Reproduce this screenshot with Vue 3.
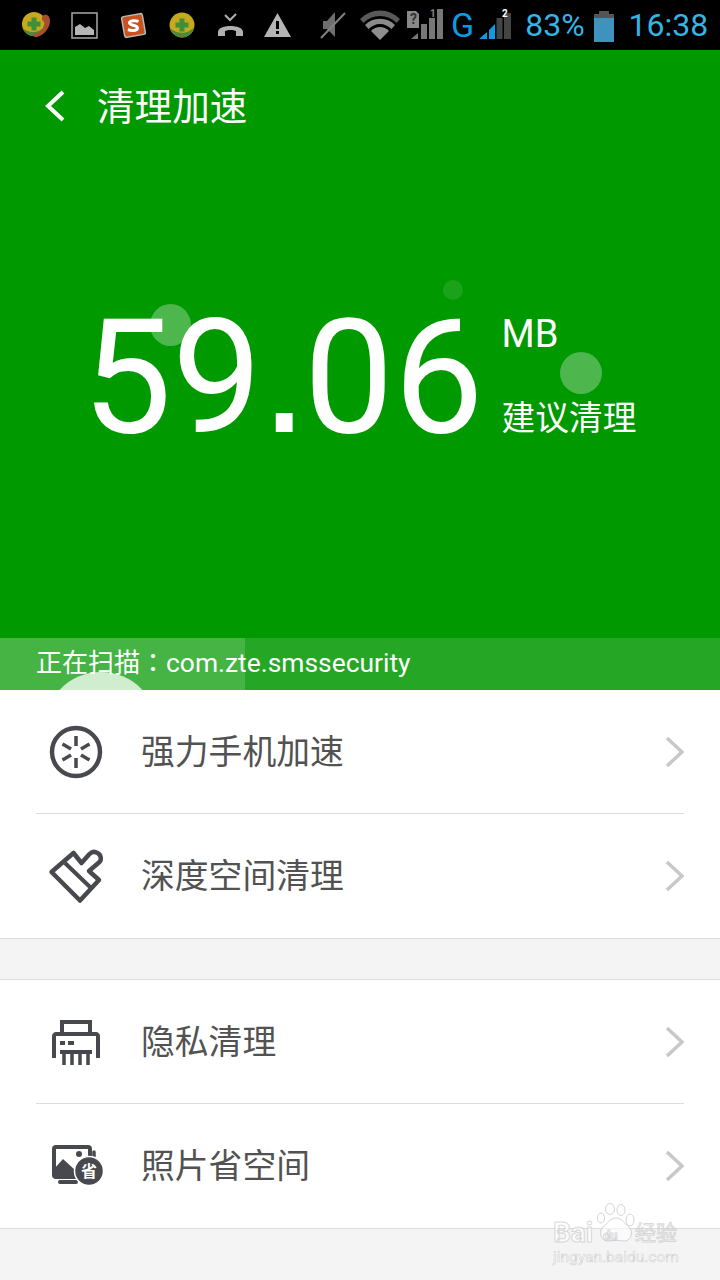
<script setup>
const groups = [
  [
    { label: '强力手机加速', icon: 'boost' },
    { label: '深度空间清理', icon: 'brush' },
  ],
  [
    { label: '隐私清理', icon: 'shredder' },
    { label: '照片省空间', icon: 'photo' },
  ],
]
</script>

<template>
  <div class="page">
    <div class="status">
      <svg class="si s1" width="30" height="30" viewBox="0 0 30 30">
        <circle cx="13" cy="14" r="12" fill="#c7a81e"/>
        <path d="M1.500 18c6 5 15 6 22-1-2 6-6 9-10.500 9-5 0-9-3-11.500-8z" fill="#4c8a3a"/>
        <path d="M10.500 7.500h5v4h4v5h-4v4h-5v-4h-4v-5h4z" fill="#3f8f3a"/>
        <path d="M23 5c4-1 6 2 6 6 0 7-6 14-13 16-3 1-5-2-3-3 5-1 9-4 10-9 1-2 0-3-1-4-2-2-1-5 1-6z" fill="#a8502c"/>
      </svg>
      <svg class="si s2" width="27" height="27" viewBox="0 0 27 27">
        <rect x="1" y="1" width="25" height="25" fill="none" stroke="#a8a8a8" stroke-width="1.500"/>
        <path d="M4 23v-8l5-3 5 4 4-2 5 4v5z" fill="#b5b5b5"/>
      </svg>
      <svg class="si s3" width="25" height="25" viewBox="0 0 25 25">
        <rect x="2" y="2" width="21" height="21" rx="2" transform="rotate(-10 12.500 12.500)" fill="#c9521f" stroke="#b9b9b9" stroke-width="1.500"/>
        <path d="M17.500 8.500c-3-1.500-9-1-9 1.500s8 2 8 5-6 3-9.500 1.500" fill="none" stroke="#fff" stroke-width="3"/>
      </svg>
      <svg class="si s4" width="26" height="26" viewBox="0 0 26 26">
        <circle cx="13" cy="13" r="12.500" fill="#c7a81e"/>
        <path d="M1 16c6 6 18 7 24-1-1 6-6 10.500-12 10.500-6 0-10-4-12-9.500z" fill="#4c8a3a"/>
        <path d="M10.500 6.500h5v4h4v5h-4v4h-5v-4h-4v-5h4z" fill="#3f8f3a"/>
      </svg>
      <svg class="si s5" width="27" height="24" viewBox="0 0 27 24">
        <path d="M8 2l5 5 6-6" fill="none" stroke="#b0b0b0" stroke-width="2"/>
        <path d="M1 23v-4c0-8 25-8 25 0v4h-7v-5c-3-1.500-8-1.500-11 0v5z" fill="#b0b0b0"/>
      </svg>
      <svg class="si s6" width="27" height="24" viewBox="0 0 27 24">
        <path d="M13.500 0L27 24H0z" fill="#b5b5b5"/>
        <rect x="12" y="8" width="3" height="8" fill="#000"/>
        <rect x="12" y="18" width="3" height="3" fill="#000"/>
      </svg>
      <svg class="si s7" width="26" height="28" viewBox="0 0 26 28">
        <path d="M3 10h4l8-9v25l-8-8H3z" fill="#6e6e6e"/>
        <path d="M1 27L25 2" stroke="#808080" stroke-width="2"/>
      </svg>
      <svg class="si s8" width="40" height="30" viewBox="0 0 40 30">
        <path d="M0 9a28 28 0 0 1 40 0l-3.500 4a23 23 0 0 0-33 0z" fill="#5a5a5a"/>
        <path d="M5 15a21 21 0 0 1 30 0l-3.500 4a16 16 0 0 0-23 0z" fill="#8a8a8a"/>
        <path d="M11 21a12 12 0 0 1 18 0L20 30z" fill="#8f8f8f"/>
      </svg>
      <svg class="si s9" width="38" height="32" viewBox="0 0 38 32">
        <path d="M1 3h9l3 3v14H1z" fill="#888"/>
        <text x="4" y="16" class="sim-mark">?</text>
        <path d="M5 31l7-6v6z" fill="#777"/>
        <rect x="15" y="16" width="6" height="15" fill="#777"/>
        <rect x="23" y="10" width="6" height="21" fill="#777"/>
        <rect x="31" y="1" width="6" height="30" fill="#777"/>
        <text x="24" y="9" class="sim-num dim">1</text>
      </svg>
      <span class="net">G</span>
      <svg class="si s10" width="33" height="32" viewBox="0 0 33 32">
        <path d="M0 31l8-7v7z" fill="#0c9be0"/>
        <path d="M10 22l6-6v15h-6z" fill="#0c9be0"/>
        <rect x="17.500" y="10" width="6" height="21" fill="#444"/>
        <rect x="25" y="5" width="7" height="26" fill="#444"/>
        <text x="23" y="9" class="sim-num">2</text>
      </svg>
      <span class="pct">83%</span>
      <svg class="si s11" width="20" height="31" viewBox="0 0 20 31">
        <rect x="5" y="0" width="10" height="4" fill="#555"/>
        <rect x="0" y="3" width="20" height="5" fill="#555"/>
        <rect x="0" y="7" width="20" height="24" fill="#3d93bd"/>
      </svg>
      <span class="time">16:38</span>
    </div>

    <section class="hero">
      <header class="bar">
        <svg class="back" width="20" height="32" viewBox="0 0 20 32">
          <path d="M18 2L3 16l15 14" fill="none" stroke="#fff" stroke-width="4"/>
        </svg>
        <h1 class="title">清理加速</h1>
      </header>

      <div class="reading">
        <span class="dot dot-a"></span>
        <span class="dot dot-b"></span>
        <span class="dot dot-c"></span>
        <span class="value">59<span class="point">.</span>06</span>
        <div class="side">
          <span class="unit">MB</span>
          <span class="hint">建议清理</span>
        </div>
      </div>

      <div class="scan">
        <span class="progress"></span>
        <span class="pulse"></span>
        <span class="scan-text"><span class="scan-cjk">正在扫描：</span>com.zte.smssecurity</span>
      </div>
    </section>

    <div class="groups">
      <ul v-for="(group, g) in groups" :key="g" class="group">
        <li v-for="item in group" :key="item.label" class="row">
          <svg v-if="item.icon === 'boost'" class="ico" width="60" height="60" viewBox="46 722 60 60">
            <circle cx="76" cy="752" r="24" fill="none" stroke="#47494e" stroke-width="4.500"/>
            <g stroke="#47494e" stroke-width="3.500">
              <path d="M76 736v10M76 758v10M62.500 744l8.500 5M81 755l8.500 5M62.500 760l8.500-5M81 749l8.500-5"/>
            </g>
          </svg>
          <svg v-else-if="item.icon === 'brush'" class="ico" width="60" height="60" viewBox="46 846 60 60">
            <path d="M51.500 872L73.500 853l8 10 8-9c2-2 5-3 8-1 4 2 4 7 2 9l-10.500 9 10 9-19 20.500z" fill="none" stroke="#47494e" stroke-width="4.500" stroke-linejoin="round"/>
            <path d="M65 863l26 25" stroke="#47494e" stroke-width="4"/>
          </svg>
          <svg v-else-if="item.icon === 'shredder'" class="ico" width="60" height="60" viewBox="46 1012 60 60">
            <path d="M62 1035v-13h28v13" fill="none" stroke="#47494e" stroke-width="4"/>
            <path d="M56 1056h-2v-20c0-1 1-2 2-2h40c1 0 2 1 2 2v20h-2" fill="none" stroke="#47494e" stroke-width="4"/>
            <rect x="60" y="1050" width="32" height="4" fill="#47494e"/>
            <rect x="60" y="1041" width="5" height="4" fill="#47494e"/>
            <rect x="68" y="1041" width="6" height="4" fill="#47494e"/>
            <path d="M64 1054v11M72 1054v11M80 1054v11M88 1054v11" stroke="#47494e" stroke-width="3.500"/>
          </svg>
          <svg v-else class="ico" width="60" height="60" viewBox="46 1136 60 60">
            <rect x="54" y="1147" width="36" height="30" rx="2" fill="#fff" stroke="#47494e" stroke-width="4"/>
            <path d="M54 1177v-8l9-10 12 11 4 7z" fill="#47494e"/>
            <circle cx="79" cy="1154" r="3" fill="#47494e"/>
            <path d="M94 1152v12" stroke="#47494e" stroke-width="3.500" stroke-linecap="round"/>
            <rect x="58" y="1180" width="20" height="4" rx="2" fill="#47494e"/>
            <circle cx="89" cy="1171" r="14.500" fill="#47494e" stroke="#fff" stroke-width="1.500"/>
            <text x="89" y="1177" class="badge">省</text>
          </svg>
          <span class="label">{{ item.label }}</span>
          <svg class="chev" width="20" height="32" viewBox="0 0 20 32">
            <path d="M3 2l15 14L3 30" fill="none" stroke="#c8c8c8" stroke-width="3.500"/>
          </svg>
        </li>
      </ul>
    </div>

    <div class="mark" aria-hidden="true">
      <svg class="paw" width="42" height="42" viewBox="0 0 42 42">
        <g fill="rgba(255,255,255,.6)" stroke="rgba(185,185,185,.6)" stroke-width="1">
          <ellipse cx="5" cy="15" rx="3.500" ry="5"/>
          <ellipse cx="14" cy="6" rx="4.500" ry="5.500"/>
          <ellipse cx="25" cy="7" rx="4" ry="5.500"/>
          <ellipse cx="34" cy="17" rx="4" ry="6"/>
          <path d="M20 15c5 0 8 5 13 9 5 5 2 15-6 14-5-1-9-1-14 0-8 1-11-9-6-14 5-4 8-9 13-9z"/>
        </g>
      </svg>
      <span class="mark-a">Bai</span>
      <span class="mark-du">du</span>
      <span class="mark-b">经验</span>
      <span class="mark-c">jingyan.baidu.com</span>
    </div>
  </div>
</template>

<style>
html, body { margin: 0; padding: 0; background: #f4f4f4; }
</style>

<style scoped>
.page {
  position: relative;
  width: 720px;
  height: 1280px;
  overflow: hidden;
  background: #f4f4f4;
  font-family: "Noto Sans CJK SC", "Noto Sans", sans-serif;
}

.status {
  height: 50px;
  background: #000;
  display: flex;
  align-items: center;
  padding-left: 21px;
  box-sizing: border-box;
  font-family: Roboto, sans-serif;
  color: #33b5e5;
}
.si { flex: none; display: block; overflow: visible; }
.s2 { margin-left: 20px; }
.s3 { margin-left: 23px; }
.s4 { margin-left: 23px; }
.s5 { margin-left: 22px; }
.s6 { margin-left: 20px; }
.s7 { margin-left: 29px; }
.s8 { margin-left: 14px; }
.s9 { margin-left: 6px; margin-top: -2px; }
.s10 { margin-left: 5px; margin-top: -2px; }
.s11 { margin-left: 9px; margin-top: 2px; }
.sim-mark { font: 700 14px Roboto, sans-serif; fill: #333; }
.sim-num { font: 700 10px Roboto, sans-serif; fill: #fff; }
.sim-num.dim { fill: #888; }
.badge { font: 700 16px "Noto Sans CJK SC", sans-serif; fill: #fff; text-anchor: middle; }
.net { margin-left: 7px; font-size: 34px; color: #0c9be0; line-height: 1; }
.pct { margin-left: 13px; font-size: 32px; line-height: 1; }
.time { margin-left: 15px; font-size: 32px; line-height: 1; }

.hero {
  height: 640px;
  background: #009900;
  display: flex;
  flex-direction: column;
  color: #fff;
}
.bar {
  height: 112px;
  display: flex;
  align-items: center;
  padding-left: 45px;
}
.back { display: block; }
.title {
  margin: 0 0 4px 32px;
  font-size: 37.600px;
  font-weight: 400;
  line-height: 1;
}

.reading {
  position: relative;
  flex: 1;
  display: flex;
  align-items: flex-start;
  padding: 122px 0 0 82px;
}
.dot { position: absolute; border-radius: 50%; }
.dot-a { left: 150px; top: 142px; width: 41px; height: 42px; background: rgba(255,255,255,.3); }
.dot-b { left: 443px; top: 118px; width: 20px; height: 20px; background: rgba(255,255,255,.1); }
.dot-c { left: 560px; top: 190px; width: 42px; height: 42px; background: rgba(255,255,255,.3); }
.value {
  position: relative;
  font-family: Roboto, sans-serif;
  font-size: 160px;
  line-height: 188px;
}
.point {
  font-family: "Liberation Sans", sans-serif;
  font-size: 176px;
  line-height: 0;
  letter-spacing: -5px;
  margin-left: -2px;
}
.side {
  position: relative;
  margin-left: 18px;
  display: flex;
  flex-direction: column;
  padding-top: 28px;
}
.unit {
  font-family: Roboto, sans-serif;
  font-size: 38px;
  line-height: 44px;
}
.hint {
  margin-top: 38px;
  font-size: 33.700px;
  line-height: 44px;
  white-space: nowrap;
}

.scan {
  position: relative;
  height: 52px;
  overflow: hidden;
  background: #25a625;
  display: flex;
  align-items: center;
  padding: 0 0 4px 36px;
  box-sizing: border-box;
}
.progress { position: absolute; left: 0; top: 0; bottom: 0; width: 245px; background: #45b445; }
.pulse {
  position: absolute;
  left: 44px;
  top: 34px;
  width: 114px;
  height: 114px;
  border-radius: 50%;
  background: #d0edd0;
}
.scan-text {
  position: relative;
  font-family: Roboto, "Noto Sans CJK TC", sans-serif;
  font-size: 26.400px;
  line-height: 1;
  white-space: nowrap;
}
.scan-cjk { font-family: "Noto Sans CJK TC", sans-serif; font-size: 26px; }

.groups { display: flex; flex-direction: column; gap: 40px; }
.group {
  list-style: none;
  margin: 0;
  padding: 0 36px;
  background: #fff;
}
.group:first-child { border-bottom: 1px solid #dcdcdc; }
.group:last-child { border-top: 1px solid #dcdcdc; border-bottom: 1px solid #dcdcdc; }
.row {
  height: 124px;
  display: flex;
  align-items: center;
  color: #525252;
}
.row:first-child { height: 123px; border-bottom: 1px solid #dcdcdc; }
.ico { flex: none; margin-left: 10px; display: block; }
.label {
  margin-left: 35px;
  padding-bottom: 4px;
  font-size: 33.800px;
  line-height: 1;
  flex: 1;
}
.chev { flex: none; display: block; }

.mark {
  position: absolute;
  left: 553px;
  top: 1200px;
  width: 130px;
  height: 66px;
  color: rgba(255,255,255,.7);
  -webkit-text-stroke: 1px rgba(185,185,185,.55);
}
.mark span { position: absolute; white-space: nowrap; line-height: 1; }
.paw { position: absolute; left: 43px; top: 3px; }
.mark-a { left: 0; top: 19px; font: 700 28px/1 Roboto, sans-serif; }
.mark-du { left: 50px; top: 29px; font: 700 13px/1 Roboto, sans-serif; }
.mark-b { left: 82px; top: 21px; font-size: 21px; }
.mark-c { left: 0; top: 50px; font: 400 15.500px/1 Roboto, sans-serif; -webkit-text-stroke: .6px rgba(185,185,185,.6); }
</style>
